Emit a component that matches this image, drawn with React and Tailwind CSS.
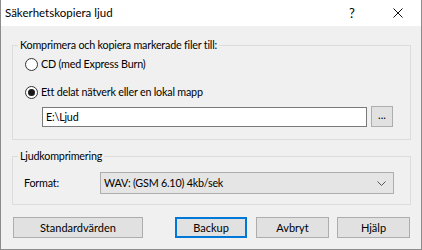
import React from 'react';

const font = { fontFamily: 'Lato, "Noto Sans", "Liberation Sans", sans-serif' };

const Radio = ({ checked, label }) => (
    <label className="flex items-center h-[16px] gap-[3px]">
        <span className="w-[13px] h-[13px] rounded-full border border-[#333333] bg-white flex items-center justify-center">
            {checked && <span className="w-[7px] h-[7px] rounded-full bg-[#1a1a1a]" />}
        </span>
        <span>{label}</span>
    </label>
);

const Button = ({ children, primary, className = '' }) => (
    <button
        className={
            'h-[21px] bg-[#e1e1e1] flex items-center justify-center text-[11px] tracking-normal text-black ' +
            (primary ? 'border-2 border-[#0078d7] ' : 'border border-[#adadad] ') +
            className
        }
    >
        {children}
    </button>
);

const App = () => {
    return (
        <div
            style={font}
            className="w-[422px] h-[250px] flex flex-col bg-[#f0f0f0] border-x border-b border-[#8c8c8c] text-[10.75px] tracking-[-0.2px] text-black leading-[16px]"
        >
            {/* Title bar */}
            <div className="h-[26px] bg-white flex items-center pl-[4px] shrink-0 text-[11.5px] tracking-normal">
                <span className="flex-1">Säkerhetskopiera ljud</span>
                <span className="w-[46px] text-center text-[13px]">?</span>
                <span className="w-[46px] flex items-center justify-center">
                    <svg width="10" height="10" viewBox="0 0 10 10">
                        <path d="M0.5 0.5 L9.5 9.5 M9.5 0.5 L0.5 9.5" stroke="#111" strokeWidth="1" />
                    </svg>
                </span>
            </div>

            {/* Body */}
            <div className="flex-1 flex flex-col pl-[11px] pr-[10px] pt-[11px]">
                <fieldset className="border border-[#dcdcdc] pb-[12px]">
                    <legend className="ml-[5px] px-[2px]">Komprimera och kopiera markerade filer till:</legend>
                    <div className="flex flex-col pl-[12px] pt-[3px] gap-[12px]">
                        <Radio label="CD (med Express Burn)" />
                        <Radio checked label="Ett delat nätverk eller en lokal mapp" />
                    </div>
                    <div className="flex items-center mt-[6px] pl-[29px] pr-[17px] gap-[4px]">
                        <div className="flex-1 h-[20px] bg-white border border-[#7a7a7a] flex items-center pl-[3px]">
                            E:\Ljud
                        </div>
                        <Button className="w-[22px] h-[21px] pb-[4px]">...</Button>
                    </div>
                </fieldset>

                <fieldset className="border border-[#dcdcdc] mt-[8px] pb-[10px]">
                    <legend className="ml-[5px] px-[2px]">Ljudkomprimering</legend>
                    <div className="flex items-center pl-[11px] pr-[16px] pt-[8px]">
                        <span className="w-[76px]">Format:</span>
                        <div className="flex-1 h-[22px] bg-[#e5e5e5] border border-[#adadad] flex items-center pl-[3px] pr-[7px]">
                            <span className="flex-1">WAV: (GSM 6.10) 4kb/sek</span>
                            <svg width="9" height="5" viewBox="0 0 9 5">
                                <path d="M0.5 0.5 L4.5 4.5 L8.5 0.5" stroke="#555" strokeWidth="1" fill="none" />
                            </svg>
                        </div>
                    </div>
                </fieldset>

                <div className="flex items-center mt-[12px]">
                    <Button className="w-[130px] ml-[1px]">Standardvärden</Button>
                    <Button primary className="w-[72px] ml-[32px]">Backup</Button>
                    <Button className="w-[73px] ml-[9px]">Avbryt</Button>
                    <Button className="w-[73px] ml-[8px]">Hjälp</Button>
                </div>
            </div>
        </div>
    );
};

export default App;
